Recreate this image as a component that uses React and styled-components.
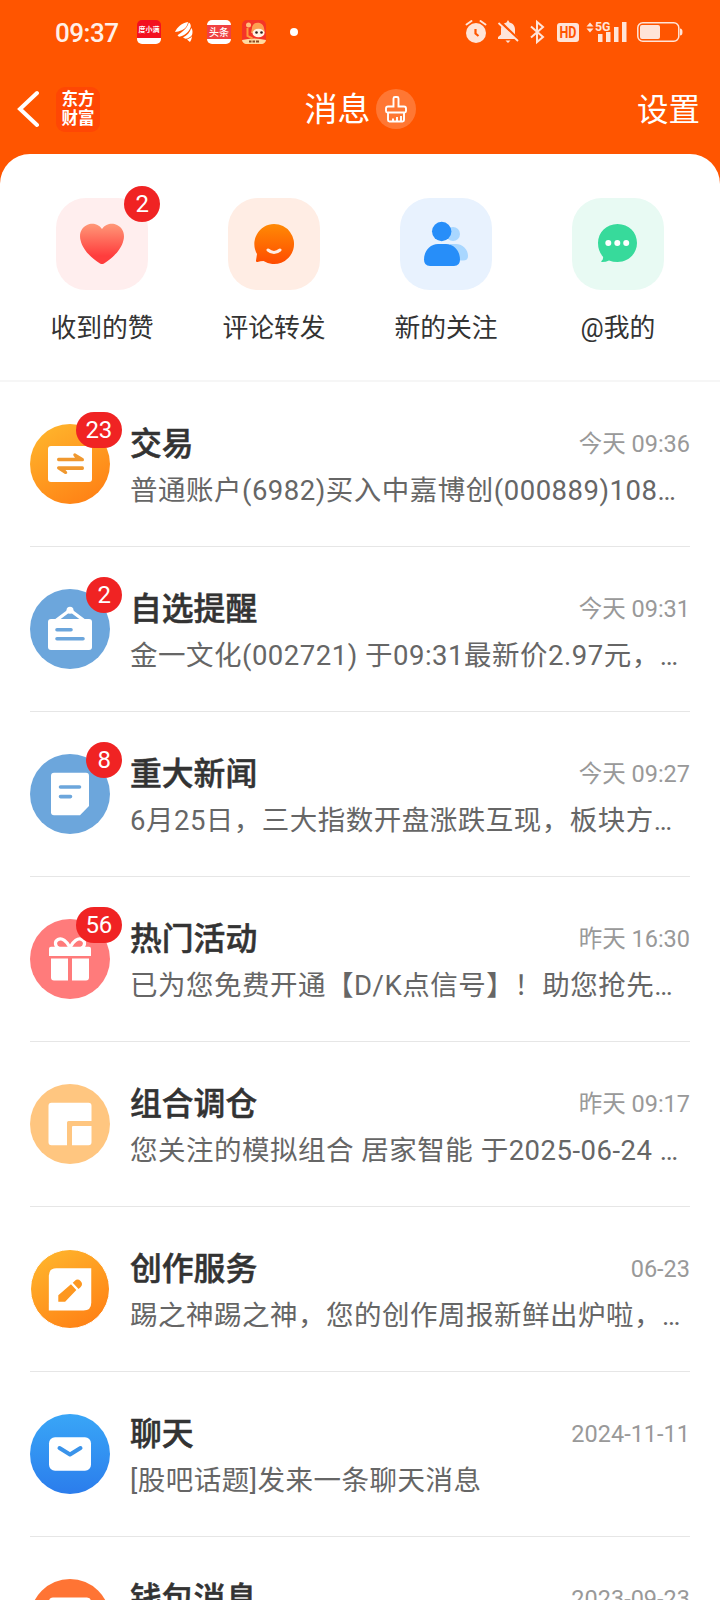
import React from "react";
import styled, { createGlobalStyle } from "styled-components";

const GlobalStyle = createGlobalStyle`
  * {
    box-sizing: border-box;
  }

  body {
    margin: 0;
    background: #ff5500;
    font-family: Roboto, "Noto Sans CJK SC", sans-serif;
  }
`;

// Top shortcuts
const shortcuts = [
  { label: "收到的赞", color: "#ffeeee", icon: <HeartIcon />, badge: 2 },
  { label: "评论转发", color: "#ffede4", icon: <SmileIcon /> },
  { label: "新的关注", color: "#e8f2fe", icon: <PeopleIcon /> },
  { label: "@我的", color: "#e8faf3", icon: <ChatIcon /> },
];

// Message list
const messages = [
  {
    title: "交易",
    time: "今天 09:36",
    text: "普通账户(6982)买入中嘉博创(000889)108…",
    icon: <TradeIcon />,
    color: "linear-gradient(150deg, #ffb92e, #ff7b12)",
    badge: 23,
  },
  {
    title: "自选提醒",
    time: "今天 09:31",
    text: "金一文化(002721) 于09:31最新价2.97元，…",
    icon: <BoardIcon />,
    color: "#6ca6dc",
    badge: 2,
  },
  {
    title: "重大新闻",
    time: "今天 09:27",
    text: "6月25日，三大指数开盘涨跌互现，板块方…",
    icon: <NewsIcon />,
    color: "#6ca6dc",
    badge: 8,
  },
  {
    title: "热门活动",
    time: "昨天 16:30",
    text: "已为您免费开通【D/K点信号】！助您抢先…",
    icon: <GiftIcon />,
    color: "#ff7b7b",
    badge: 56,
  },
  {
    title: "组合调仓",
    time: "昨天 09:17",
    text: "您关注的模拟组合 居家智能 于2025-06-24 …",
    icon: <LayoutIcon />,
    color: "#ffc680",
  },
  {
    title: "创作服务",
    time: "06-23",
    text: "踢之神踢之神，您的创作周报新鲜出炉啦，…",
    icon: <PencilIcon />,
    color: "linear-gradient(150deg, #ffb92e, #ff7b12)",
    small: true,
  },
  {
    title: "聊天",
    time: "2024-11-11",
    text: "[股吧话题]发来一条聊天消息",
    icon: <MailIcon />,
    color: "linear-gradient(#39a6f7, #2b7dec)",
  },
  {
    title: "钱包消息",
    time: "2023-09-23",
    text: "",
    icon: <WalletIcon />,
    color: "#ff7434",
  },
];

export default function App() {
  return (
    <Screen>
      <GlobalStyle />
      <StatusBar>
        <Clock>09:37</Clock>
        <AppIcons>
          <LoanApp>
            <span>度小满</span>
          </LoanApp>
          <WingIcon />
          <NewsApp>头条</NewsApp>
          <GameIcon />
        </AppIcons>
        <Dot />
        <SystemIcons />
      </StatusBar>

      <NavBar>
        <NavLeft>
          <BackIcon />
          <Brand>
            <span>东方</span>
            <span>财富</span>
          </Brand>
        </NavLeft>
        <NavTitle>
          消息
          <CleanButton>
            <BrushIcon />
          </CleanButton>
        </NavTitle>
        <NavAction>设置</NavAction>
      </NavBar>

      <Sheet>
        <Shortcuts>
          {shortcuts.map((item) => (
            <Shortcut key={item.label}>
              <Tile $color={item.color}>
                {item.icon}
                {item.badge && <Badge>{item.badge}</Badge>}
              </Tile>
              <ShortcutLabel>{item.label}</ShortcutLabel>
            </Shortcut>
          ))}
        </Shortcuts>

        <List>
          {messages.map((item) => (
            <Row key={item.title}>
              <Avatar>
                <Disc $color={item.color} $small={item.small}>
                  {item.icon}
                </Disc>
                {item.badge && <Badge>{item.badge}</Badge>}
              </Avatar>
              <Content>
                <RowHead>
                  <RowTitle>{item.title}</RowTitle>
                  <RowTime>{item.time}</RowTime>
                </RowHead>
                <RowText>{item.text}</RowText>
              </Content>
            </Row>
          ))}
        </List>
      </Sheet>
    </Screen>
  );
}

function WingIcon() {
  return (
    <svg width="18" height="20" viewBox="0 0 18 20" fill="#fff">
      <path d="M0 10C2 5 7 1 13 0c-.3 4-3.500 9-13 10z" />
      <path d="M2.500 13.200C8.500 9.500 12.500 5.500 13.800.5c1.700 1 2.200 2.700 1.900 4.500C14 10 10 13.500 4 14.800z" />
      <path d="M8 15.500c4-2 7-5 8.300-9.500 1.500 2 1.500 4.500.7 7-1.500 2-4 3.600-6.500 3.800z" />
      <path d="M12 17.500c2.500-.8 4-1.800 5-3.500-.2 2.500-1 4.500-2 6z" />
    </svg>
  );
}

function GameIcon() {
  return (
    <svg width="24" height="24" viewBox="0 0 24 24">
      <rect width="24" height="24" rx="5" fill="#f53527" />
      <path d="M10 8c0-7 11-7 12 0l1 5H9z" fill="#fda052" />
      <path d="M0 20q12-3 24 0a4.500 4.500 0 0 1-5 4H5a4.500 4.500 0 0 1-5-4z" fill="#ffdba0" />
      <circle cx="6.500" cy="5" r="2.500" fill="#ffc07a" />
      <path d="M5.500 8v8l5 2.500" stroke="#ff9a3c" strokeWidth="2" fill="none" />
      <ellipse cx="16.500" cy="13" rx="6" ry="4.300" fill="#fff3e4" />
      <circle cx="14.500" cy="12.500" r="1.300" fill="#33211c" />
      <circle cx="19.500" cy="12.500" r="1.300" fill="#33211c" />
      <path d="M7 21.500h2.500m1 0h2.500m1 0h3" stroke="#8a4a24" strokeWidth="2" />
    </svg>
  );
}

// Alarm, muted bell, bluetooth, HD, signal and battery
function SystemIcons() {
  return (
    <SystemSvg width="218" height="24" viewBox="0 0 218 24" fill="#ffe4d8">
      <circle cx="11" cy="13" r="10" />
      <path d="M1.500 4.500l5-3.500M20.500 4.500l-5-3.500" stroke="#ffe4d8" strokeWidth="2" strokeLinecap="round" />
      <path d="M10.500 9v4.500l3 2.500" stroke="#ff5500" strokeWidth="2.200" fill="none" />

      <path d="M43 0l1.500 2.500c4 .8 5.500 4 5.500 7v5l3 3v1.500H33V17l3-2.500V9.500c0-3 1.500-6.200 5.500-7zM40.500 20.500h5L43 23z" />
      <path d="M35 1.500l19.500 19" stroke="#ff5500" strokeWidth="2.500" />
      <path d="M33.500 3l19.500 18" stroke="#ffe4d8" strokeWidth="1.800" />

      <path
        d="M66 6.500l12 10.500-6 5V2l6 5-12 10.500"
        fill="none"
        stroke="#ffe4d8"
        strokeWidth="2"
      />

      <rect x="92" y="3" width="22" height="19" rx="3" />
      <text
        x="94.500"
        y="18.200"
        fill="#ff5500"
        fontSize="16"
        fontWeight="700"
        textLength="17"
        lengthAdjust="spacingAndGlyphs"
      >
        HD
      </text>

      <path d="M121.500 6.500l3.500-4 3.500 4zM121.500 8.500h7l-3.500 4z" />
      <text x="130" y="10.800" fontSize="13.500" fontWeight="700" textLength="15.500" lengthAdjust="spacingAndGlyphs">
        5G
      </text>
      <path d="M133 14h4.500v8H133zM141 12h4.500v10H141zM149 7h4.500v15H149zM157 2h4.500v20H157z" />

      <rect x="172.800" y="2.800" width="41" height="18.500" rx="5" fill="none" stroke="#ffe4d8" strokeWidth="1.500" />
      <rect x="175" y="5" width="20" height="14" rx="2" />
      <path d="M215 8.500q2.500 0 2.500 3.500t-2.500 3.500z" />
    </SystemSvg>
  );
}

function BackIcon() {
  return (
    <svg width="22" height="38" viewBox="0 0 22 38">
      <path d="M20 3L3 19l17 16" fill="none" stroke="#fff" strokeWidth="4" strokeLinecap="round" />
    </svg>
  );
}

function BrushIcon() {
  return (
    <svg width="24" height="28" viewBox="0 0 24 28" fill="none" stroke="#fff" strokeWidth="1.900">
      <path d="M9.500 11.500V3.500q0-1.500 1.500-1.500h2q1.500 0 1.500 1.500v8H20q2 0 2 2V16q0 1.500-1.500 1.500h-17Q2 17.500 2 16v-2.500q0-2 2-2z" />
      <path d="M4 17.500V25q0 1.500 1.500 1.500h13q1.500 0 1.500-1.500v-7.500M9 26v-2.500M13 26v-4M17 26v-5" />
    </svg>
  );
}

function HeartIcon() {
  return (
    <TileSvg viewBox="0 0 92 92">
      <defs>
        <linearGradient id="heart" x1="0" y1="0" x2="0" y2="1">
          <stop offset="0" stopColor="#ff9878" />
          <stop offset="0.800" stopColor="#ff3d3d" />
        </linearGradient>
      </defs>
      <path
        d="M46 31C42 25 35 25 31 27c-6 3-8 9-6.500 15C27 53 36 60 44 65.500q2 1 4 0C56 60 65 53 67.500 42 69 36 67 30 61 27c-4-2-11-2-15 4z"
        fill="url(#heart)"
      />
    </TileSvg>
  );
}

function SmileIcon() {
  return (
    <TileSvg viewBox="0 0 92 92">
      <defs>
        <linearGradient id="smile" x1="0" y1="0" x2="0" y2="1">
          <stop offset="0" stopColor="#ff8a05" />
          <stop offset="1" stopColor="#ff4c00" />
        </linearGradient>
      </defs>
      <path
        d="M46 26a20 20 0 1 1-10.500 37q-3 .2-6 1-1.800.2-1.500-1.500l1-6.500A20 20 0 0 1 46 26z"
        fill="url(#smile)"
      />
      <path d="M40 52q6 5 12 0" fill="none" stroke="#ffede4" strokeWidth="3" strokeLinecap="round" />
    </TileSvg>
  );
}

function PeopleIcon() {
  return (
    <TileSvg viewBox="0 0 92 92">
      <g fill="#a9d7ff">
        <circle cx="53" cy="36" r="7" />
        <path d="M50 46h6c7 0 12 6 12 12q0 4.500-5 4.500H50z" />
      </g>
      <g fill="#278ef9">
        <circle cx="41.700" cy="33.500" r="9.700" />
        <path d="M38 46h8c8 0 14 7 14 15.500q0 6.500-6 6.500H30q-6 0-6-6.500C24 53 30 46 38 46z" />
      </g>
    </TileSvg>
  );
}

function ChatIcon() {
  return (
    <TileSvg viewBox="0 0 92 92">
      <path
        d="M45.500 26C57 26 65 34.500 65 45s-8.500 19-19.500 19q-4.500 0-8.500-1.500-3 1.500-7 1.500-1.500-.3-.3-1.200 1.800-1.500 1.300-4Q26 53 26 45c0-10.500 8.500-19 19.500-19z"
        fill="#37da9b"
      />
      <g fill="#fff">
        <circle cx="36.300" cy="45" r="3" />
        <circle cx="45.300" cy="45" r="3" />
        <circle cx="54.200" cy="45" r="3" />
      </g>
    </TileSvg>
  );
}

function TradeIcon() {
  return (
    <DiscSvg viewBox="0 0 80 80">
      <rect x="18" y="22" width="44" height="36" rx="3" fill="#fff" />
      <path
        d="M28.500 33.700h16.500l-1.500-2q-.8-2.500 1.500-2.500L52.500 33.700q1.500.5 1.500 2T52.500 37.300h-24q-1.500 0-1.500-1.800t1.500-1.800zM52.500 42.300h-24q-1.500 0-1.500 1.500t1.500 2l6.500 4.200q3 .2 2-2.200L35.500 46h17q1.500 0 1.500-1.800t-1.500-1.900z"
        fill="#f0982f"
      />
    </DiscSvg>
  );
}

function BoardIcon() {
  return (
    <DiscSvg viewBox="0 0 80 80">
      <rect x="18" y="30" width="44" height="31" rx="3" fill="#fff" />
      <path d="M26 31.500L40 21l14 10.500" fill="none" stroke="#fff" strokeWidth="3.400" />
      <circle cx="40" cy="21.300" r="3.500" fill="#fff" />
      <path d="M27 40.700h14M27 49.700h26" stroke="#6ca6dc" strokeWidth="3.600" strokeLinecap="round" />
    </DiscSvg>
  );
}

function NewsIcon() {
  return (
    <DiscSvg viewBox="0 0 80 80">
      <path d="M24 18.700h32q3 0 3 3V52l-9 9.300H24q-3 0-3-3V21.700q0-3 3-3z" fill="#fff" />
      <path d="M30.500 33h19M30.500 42.600h10" stroke="#6ca6dc" strokeWidth="3.600" strokeLinecap="round" />
    </DiscSvg>
  );
}

function GiftIcon() {
  return (
    <DiscSvg viewBox="0 0 80 80">
      <path
        d="M40 28.500C37 22 32 18.500 28 20.500s-3 7 1 9M40 28.500C43 22 48 18.500 52 20.500s3 7-1 9"
        fill="none"
        stroke="#fff"
        strokeWidth="3.200"
      />
      <path
        d="M21 27.800h38q2 0 2 2V37H19v-7.200q0-2 2-2zM21 39.500h17v22H24q-3 0-3-3zM42 39.500h17v19q0 3-3 3H42z"
        fill="#fff"
      />
    </DiscSvg>
  );
}

function LayoutIcon() {
  return (
    <DiscSvg viewBox="0 0 80 80">
      <path
        d="M21.500 18.700h37q3 0 3 3V37H38.500q-1.500 0-1.500 1.500v22.800H21.500q-3 0-3-3V21.700q0-3 3-3zM43 42h18.500v16.300q0 3-3 3H42V43q0-1 1-1z"
        fill="#fff"
      />
    </DiscSvg>
  );
}

function PencilIcon() {
  return (
    <DiscSvg viewBox="0 0 80 80">
      <path d="M26 18.800h35.800V54q0 8-8 8H18.300V26.500q0-7.700 7.700-7.700z" fill="#fff" />
      <path
        d="M28 46.500L41 35 46.500 41 35 53h-7zM42.800 33.700l2-2q3-3 6 0t.2 6.300l-2.200 2z"
        fill="#fd9720"
      />
    </DiscSvg>
  );
}

function MailIcon() {
  return (
    <DiscSvg viewBox="0 0 80 80">
      <rect x="19" y="23.300" width="42" height="33.500" rx="6" fill="#fff" />
      <path
        d="M29.500 34L40 40.500 50.500 34"
        fill="none"
        stroke="#3a93ea"
        strokeWidth="4"
        strokeLinecap="round"
        strokeLinejoin="round"
      />
    </DiscSvg>
  );
}

function WalletIcon() {
  return (
    <DiscSvg viewBox="0 0 80 80">
      <rect x="19" y="18.500" width="42" height="40" rx="4" fill="#fff" />
    </DiscSvg>
  );
}

const Screen = styled.div`
  display: flex;
  flex-direction: column;
  width: 720px;
  height: 1600px;
  overflow: hidden;
  background: #ff5500;
`;

const StatusBar = styled.div`
  display: flex;
  align-items: center;
  height: 64px;
  padding: 0 37px 0 55px;
`;

const Clock = styled.span`
  width: 82px;
  padding-top: 2px;
  font-size: 26px;
  font-weight: 500;
  letter-spacing: -0.5px;
  color: #fff0e8;
`;

const AppIcons = styled.div`
  display: grid;
  grid-template-columns: 24px 24px 24px 24px;
  column-gap: 11px;
  align-items: center;
  justify-items: center;
`;

const LoanApp = styled.div`
  display: flex;
  justify-content: center;
  width: 24px;
  height: 24px;
  border-radius: 5px;
  background: linear-gradient(#f3101f 76%, #fff 76%);

  span {
    font-size: 7px;
    line-height: 21px;
    font-weight: 700;
    color: #fff;
    white-space: nowrap;
  }
`;

const NewsApp = styled.div`
  width: 24px;
  height: 24px;
  border-radius: 5px;
  background: linear-gradient(#fff 20%, #f04142 20%, #f04142 80%, #fff 80%);
  font-size: 10px;
  line-height: 25px;
  font-weight: 500;
  text-align: center;
  color: #fff;
`;

const Dot = styled.i`
  width: 8px;
  height: 8px;
  margin-left: 24px;
  border-radius: 50%;
  background: #fff;
`;

const SystemSvg = styled.svg`
  margin-left: auto;
  overflow: visible;
`;

const NavBar = styled.header`
  display: grid;
  grid-template-columns: 1fr auto 1fr;
  align-items: center;
  height: 90px;
  padding: 0 20px 0 17px;
  color: #fff;
`;

const NavLeft = styled.div`
  display: flex;
  align-items: center;
  gap: 17px;
`;

const Brand = styled.div`
  display: flex;
  flex-direction: column;
  align-items: center;
  justify-content: center;
  width: 44px;
  height: 45px;
  border-radius: 9px;
  background: #ff4704;
  font-size: 16.5px;
  line-height: 19.5px;
  font-weight: 700;
`;

const NavTitle = styled.h1`
  display: flex;
  align-items: center;
  gap: 5px;
  margin: 0;
  padding: 2px 0 0 3px;
  font-size: 33px;
  line-height: 46px;
  font-weight: 400;
`;

const CleanButton = styled.span`
  display: flex;
  align-items: center;
  justify-content: center;
  width: 40px;
  height: 40px;
  margin-bottom: 2px;
  border-radius: 50%;
  background: rgba(255, 255, 255, 0.2);
`;

const NavAction = styled.span`
  justify-self: end;
  padding-top: 4px;
  font-size: 31.5px;
  line-height: 44px;
`;

const Sheet = styled.main`
  flex: 1;
  min-height: 0;
  border-radius: 30px 30px 0 0;
  background: #fff;
  overflow: hidden;
`;

const Shortcuts = styled.nav`
  display: grid;
  grid-template-columns: repeat(4, 172px);
  height: 228px;
  padding: 44px 16px 0;
  border-bottom: 2px solid #f6f6f6;
`;

const Shortcut = styled.div`
  display: flex;
  flex-direction: column;
  align-items: center;
  gap: 19px;
`;

const Tile = styled.div`
  position: relative;
  width: 92px;
  height: 92px;
  border-radius: 30px;
  background: ${(props) => props.$color};
`;

const TileSvg = styled.svg`
  display: block;
  width: 92px;
  height: 92px;
`;

const ShortcutLabel = styled.span`
  font-size: 25.8px;
  line-height: 38px;
  color: #333;
`;

// Red counter over the top right corner of a tile or avatar
const Badge = styled.span`
  position: absolute;
  top: -12px;
  right: -12px;
  min-width: 36px;
  height: 36px;
  padding: 0 10px;
  border-radius: 18px;
  background: #f02323;
  color: #fff;
  font-size: 24px;
  line-height: 36px;
  letter-spacing: -0.3px;
  text-align: center;
`;

const List = styled.div`
  padding: 0 30px;
`;

const Row = styled.article`
  display: flex;
  gap: 20px;
  height: 165px;
  border-bottom: 1px solid #e6e6e6;
`;

const Avatar = styled.div`
  position: relative;
  flex: none;
  width: 80px;
  height: 80px;
  margin-top: 42px;
`;

const Disc = styled.div`
  width: 80px;
  height: 80px;
  border: ${(props) => (props.$small ? "1px solid #fff" : "0")};
  border-radius: 50%;
  background: ${(props) => props.$color};
`;

const DiscSvg = styled.svg`
  display: block;
  width: 100%;
  height: 100%;
`;

const Content = styled.div`
  flex: 1;
  min-width: 0;
  padding-top: 42px;
`;

const RowHead = styled.div`
  display: flex;
  align-items: center;
  justify-content: space-between;
  height: 40px;
`;

const RowTitle = styled.h2`
  margin: 0;
  font-size: 31.8px;
  line-height: 40px;
  font-weight: 500;
  -webkit-text-stroke: 0.5px #333;
  color: #333;
`;

const RowTime = styled.time`
  font-size: 23.5px;
  line-height: 40px;
  color: #999;
`;

const RowText = styled.p`
  margin: 7px 0 0;
  font-size: 27.5px;
  line-height: 40px;
  letter-spacing: 0.5px;
  color: #666;
  white-space: nowrap;
`;
